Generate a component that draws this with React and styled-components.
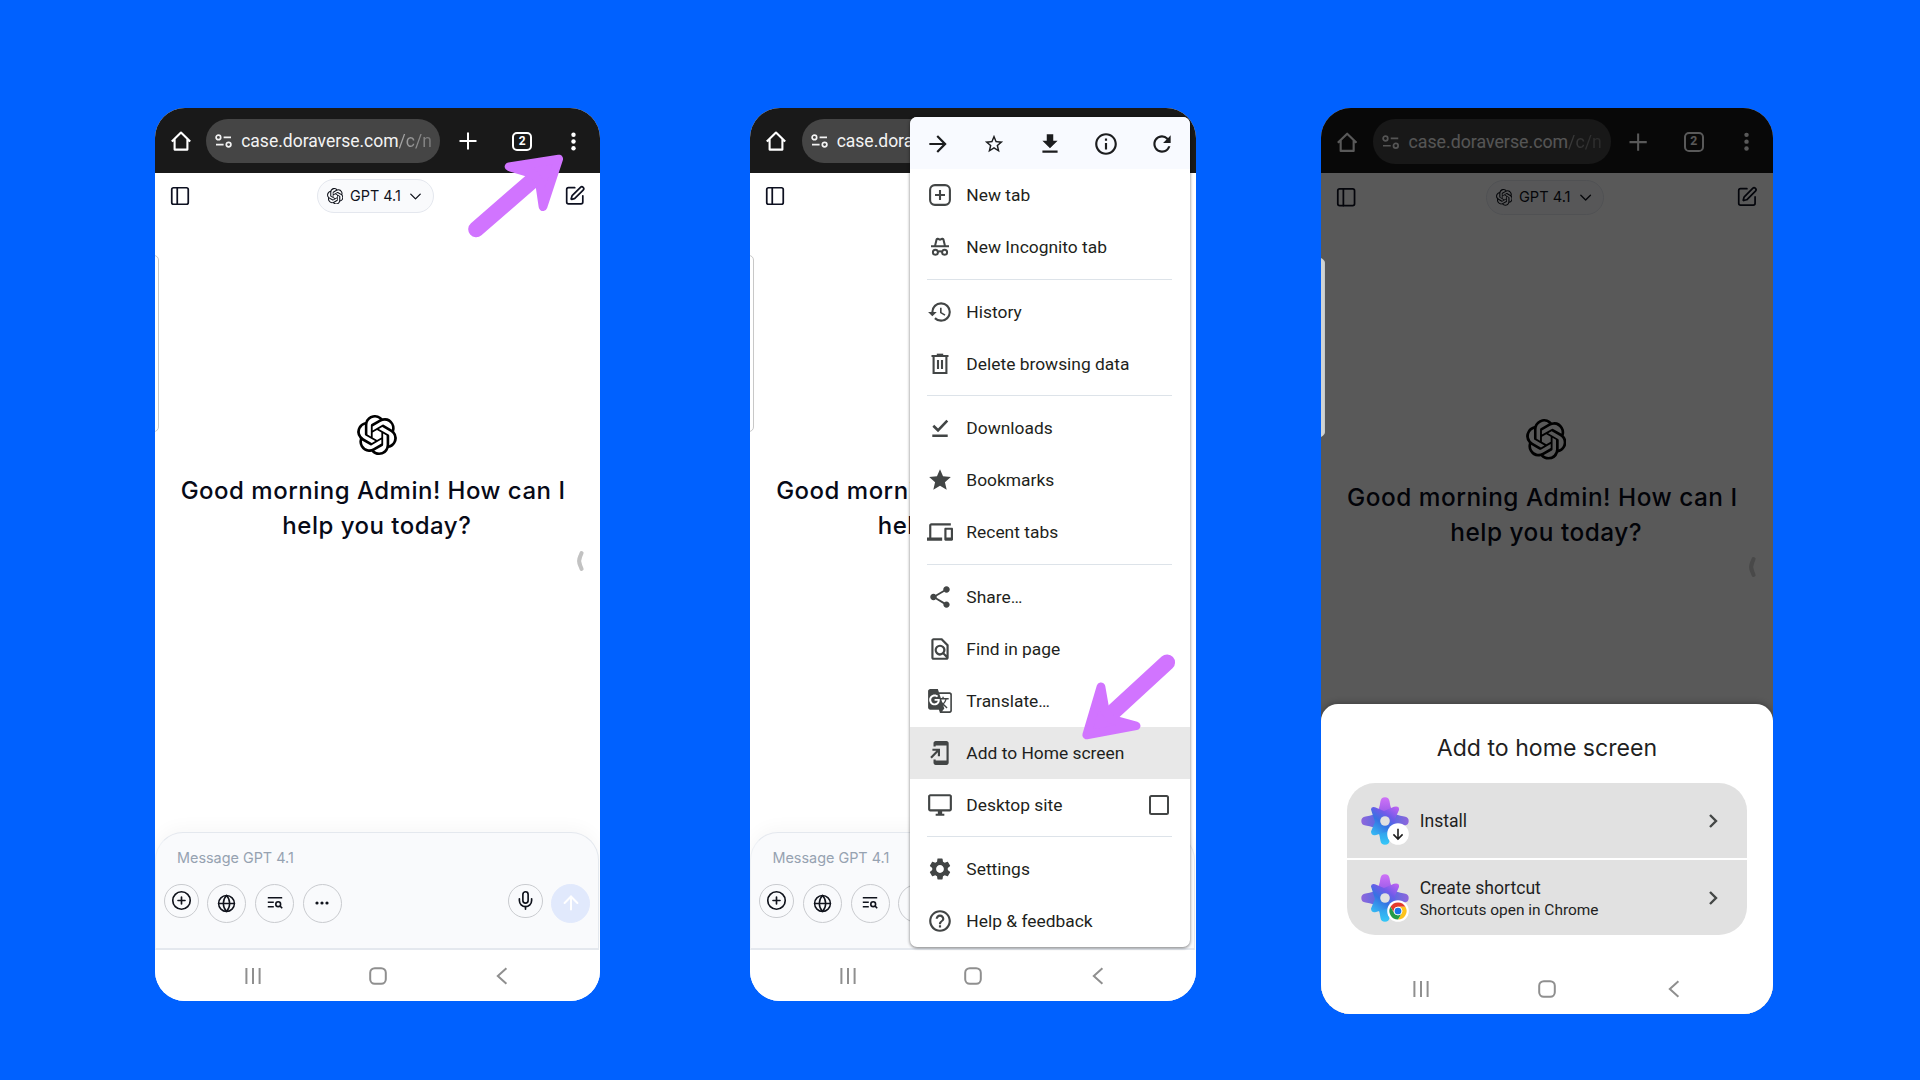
import React from "react";
import styled, { createGlobalStyle } from "styled-components";
import {
  MdGTranslate,
  MdAddToHomeScreen,
  MdOutlineFindInPage,
  MdDevices,
  MdFileDownload,
  MdHistory,
  MdArrowForward,
  MdStarBorder,
  MdInfoOutline,
  MdRefresh,
  MdStar,
  MdShare,
  MdOutlineDesktopWindows,
  MdSettings,
  MdHelpOutline,
} from "react-icons/md";
import { SiOpenai } from "react-icons/si";
import { PanelLeft, SquarePen, ChevronDown, Globe, CirclePlus, Mic, ArrowUp } from "lucide-react";

const ui = `Inter, "Liberation Sans", sans-serif`;
const android = `Roboto, "Liberation Sans", sans-serif`;

const GlobalStyle = createGlobalStyle`
  * { box-sizing: border-box; }
  body { margin: 0; background: #0061ff; overflow: hidden; }
  svg { display: block; flex: none; }
`;

const Stage = styled.main`
  width: 1920px;
  height: 1080px;
  padding: 108px 0 0 155px;
  display: flex;
  align-items: flex-start;
  background: #0061ff;
`;

const Phone = styled.section`
  position: relative;
  flex: none;
  width: ${(p) => p.$width}px;
  height: ${(p) => p.$height}px;
  margin-right: ${(p) => p.$gap || 0}px;
  border-radius: 30px;
  overflow: hidden;
  background: #fff;
`;

const Screen = styled.div`
  width: 445.3px;
  height: 893px;
  zoom: ${(p) => p.$scale};
  display: flex;
  flex-direction: column;
  background: #fff;
`;

/* Browser toolbar */
const BrowserBar = styled.header`
  height: 64.5px;
  flex: none;
  padding: 11px 0 9px 13.6px;
  display: flex;
  align-items: center;
  background: #191919;
  color: #fff;
`;

const BarIcon = styled.span`
  width: 24px;
  height: 24px;
  flex: none;
  margin-left: ${(p) => p.$gap || 0}px;
  display: grid;
  place-items: center;
`;

const Address = styled.div`
  width: 234px;
  height: 44px;
  flex: none;
  margin-left: 13.7px;
  padding-left: 9px;
  border-radius: 22px;
  display: flex;
  align-items: center;
  background: #454545;
  font: 400 17.5px/44px ${android};
  white-space: nowrap;
  overflow: hidden;
`;

const AddressText = styled.span`
  margin-left: 8.4px;
  padding-top: 0.4px;
  color: #f3f3f3;
`;

const AddressPath = styled.span`
  background: linear-gradient(90deg, #aaa, #777);
  background-clip: text;
  color: transparent;
`;

const TabCount = styled.span`
  width: 19.5px;
  height: 19.5px;
  border: 2px solid #fff;
  border-radius: 5px;
  display: grid;
  place-items: center;
  font: 700 12px/15px ${android};
`;

/* Chat page */
const ChatHeader = styled.div`
  height: 47px;
  flex: none;
  padding: 0 15px 0 14px;
  display: flex;
  align-items: center;
  justify-content: space-between;
  color: #0d1020;
`;

const ModelChip = styled.div`
  width: 116.5px;
  height: 34.5px;
  margin-right: 4px;
  border: 1px solid #e4e7ee;
  border-radius: 18px;
  background: #f9fafc;
  display: flex;
  align-items: center;
  padding-left: 8.8px;
  font: 400 14.4px/20px ${ui};
  color: #10131c;
`;

const ModelName = styled.span`
  width: 62.5px;
  padding-left: 6.6px;
  white-space: nowrap;
`;

const Greeting = styled.div`
  flex: 1;
  padding: 195.3px 1.6px 0 0;
  display: flex;
  flex-direction: column;
  align-items: center;
  color: #000;
`;

const GreetingText = styled.h1`
  margin: 19.6px 0 0;
  font: 450 24px/34.7px ${ui};
  letter-spacing: 0.5px;
  color: #070a17;
  text-align: center;
`;

const GreetingLine = styled.span`
  display: block;
  white-space: nowrap;
  padding-right: ${(p) => p.$trail || 0}px;
`;

const Composer = styled.div`
  height: 118px;
  flex: none;
  margin-right: 1px;
  padding: 15px 8px 0;
  border: 1px solid #e4e8ee;
  border-left-color: #eef1f5;
  border-bottom-width: 2px;
  border-radius: 28px 28px 0 0;
  background: #f9fafc;
  box-shadow: 0 -4px 18px rgba(0, 0, 0, 0.035);
`;

const Placeholder = styled.div`
  padding-left: 13px;
  font: 400 14.4px/20px ${ui};
  color: #96a2b1;
`;

const ComposerActions = styled.div`
  margin-top: 16px;
  display: flex;
  align-items: flex-start;
  gap: 8.8px;
`;

const Spacer = styled.span`
  flex: 1;
`;

const RoundButton = styled.span`
  width: ${(p) => p.$size}px;
  height: ${(p) => p.$size}px;
  border: 1px solid ${(p) => (p.$filled ? "#e1e9fc" : "#c9cbcf")};
  border-radius: 50%;
  display: grid;
  place-items: center;
  background: ${(p) => (p.$filled ? "#e1e9fc" : "transparent")};
  color: ${(p) => (p.$filled ? "#fff" : "#10131c")};
`;

const SystemNav = styled.nav`
  height: ${(p) => p.$height}px;
  flex: none;
  padding: 1.4px 0 0 ${(p) => p.$inset}px;
  display: flex;
  align-items: center;
  gap: ${(p) => p.$gap}px;
  background: #fff;
  color: #8f8f8f;
`;

/* Edge handles floating over the page */
const EdgePanel = styled.i`
  position: absolute;
  left: -6px;
  top: ${(p) => p.$top}px;
  width: ${(p) => (p.$lit ? 10 : 9.8)}px;
  height: ${(p) => p.$height}px;
  border: 1px solid ${(p) => (p.$lit ? "#c6cacb" : "#c8c8c8")};
  border-radius: 0 5px 5px 0;
  background: ${(p) => (p.$lit ? "#cfd3d4" : "#fff")};
`;

const EdgeGrip = styled.svg`
  position: absolute;
  left: ${(p) => p.$left}px;
  top: ${(p) => p.$top}px;
  width: 10px;
  height: 24px;
`;

/* Overflow menu */
const Menu = styled.div`
  position: absolute;
  left: 159.7px;
  top: 9px;
  width: 279.5px;
  height: 830px;
  border-radius: 7px;
  overflow: hidden;
  background: #fff;
  display: flex;
  flex-direction: column;
  box-shadow: 0 1px 3px rgba(0, 0, 0, 0.45), 0 0 4px rgba(0, 0, 0, 0.12);
`;

const MenuTools = styled.div`
  height: 52.4px;
  flex: none;
  padding: 1px 15px 0;
  display: flex;
  align-items: center;
  justify-content: space-between;
  background: #f8faff;
  color: #1c1d1f;
`;

const ToolSlot = styled.span`
  width: 26px;
  display: grid;
  place-items: center;
`;

const MenuRow = styled.div`
  height: 52px;
  flex: none;
  padding: 0 20.5px 0 17.2px;
  display: flex;
  align-items: center;
  background: ${(p) => (p.$active ? "#e8e8e8" : "transparent")};
  color: #424545;
`;

const MenuLabel = styled.span`
  flex: 1;
  margin-left: 13px;
  font: 400 17.4px/24px ${android};
  color: #1e1f20;
  white-space: nowrap;
`;

const MenuRule = styled.hr`
  width: 245px;
  height: 1.4px;
  flex: none;
  margin: 5.2px 0 5.9px 17px;
  border: 0;
  background: #dde3e9;
`;

const Checkbox = styled.span`
  width: 20px;
  height: 20px;
  border: 2px solid #424545;
  border-radius: 2.5px;
`;

/* Install sheet */
const Dim = styled.div`
  position: absolute;
  inset: 0;
  background: rgba(0, 0, 0, 0.65);
`;

const Sheet = styled.div`
  position: absolute;
  left: 0;
  right: 0;
  bottom: 0;
  height: 310px;
  border-radius: 17px 17px 0 0;
  background: #fff;
  box-shadow: 0 -1px 6px rgba(0, 0, 0, 0.3);
  display: flex;
  flex-direction: column;
`;

const SheetTitle = styled.h2`
  margin: 28px 0 19.4px;
  font: 400 23.1px/32px ${ui};
  text-align: center;
  color: #1f1f1f;
`;

const OptionList = styled.div`
  margin: 0 26px;
  border-radius: 28px;
  overflow: hidden;
  display: flex;
  flex-direction: column;
  gap: 2.4px;
`;

const Option = styled.div`
  height: 74.7px;
  padding: 0 21.5px 0 13.8px;
  display: flex;
  align-items: center;
  background: #e1e1e1;
  color: #444746;
`;

const OptionText = styled.div`
  flex: 1;
  margin-left: 10.9px;
  padding-top: ${(p) => (p.$tall ? 3.5 : 1.6)}px;
  font: 400 17.6px/21.8px ${android};
  color: #1f1f1f;
`;

const OptionNote = styled.div`
  font-size: 15.45px;
`;

const PointerLayer = styled.svg`
  position: absolute;
  left: 0;
  top: 0;
  width: 1920px;
  height: 1080px;
  pointer-events: none;
`;

function HomeGlyph() {
  return (
    <svg width="22" height="22" viewBox="0 0 22 22" fill="none" stroke="currentColor" strokeWidth="2.1">
      <path d="M1.8 11.6 11 2.600l9.200 9M4.600 9.200v10.400h12.800V9.200" strokeLinejoin="round" />
    </svg>
  );
}

function SiteControls() {
  return (
    <svg width="17.5" height="14" viewBox="0 0 17.5 14" fill="none" stroke="#f3f3f3" strokeWidth="1.7">
      <circle cx="3.4" cy="3.4" r="2.3" />
      <path d="M8.6 3.4H16M1 10.6h7.6" />
      <circle cx="13.6" cy="10.6" r="2.3" />
    </svg>
  );
}

function Toolbar() {
  return (
    <BrowserBar>
      <BarIcon><HomeGlyph /></BarIcon>
      <Address>
        <SiteControls />
        <AddressText>case.doraverse.com<AddressPath>/c/n</AddressPath></AddressText>
      </Address>
      <BarIcon $gap={15.6}>
        <svg width="18" height="18" viewBox="0 0 18 18" stroke="currentColor" strokeWidth="2"><path d="M9 .5v17M.5 9h17" /></svg>
      </BarIcon>
      <BarIcon $gap={30.3}><TabCount>2</TabCount></BarIcon>
      <BarIcon $gap={27.7}>
        <svg width="5" height="19" viewBox="0 0 5 19" fill="currentColor">
          <circle cx="2.5" cy="2.8" r="2.2" /><circle cx="2.5" cy="9.5" r="2.2" /><circle cx="2.5" cy="16.2" r="2.2" />
        </svg>
      </BarIcon>
    </BrowserBar>
  );
}

function ListSearch() {
  return (
    <svg width="16" height="14" viewBox="0 0 16 14" fill="none" stroke="currentColor" strokeWidth="1.6">
      <path d="M.8 1.8h14.4M.8 6.3h6M.8 10.8h6" />
      <circle cx="11.2" cy="8.2" r="2.4" />
      <path d="m12.9 9.9 2.3 2.3" />
    </svg>
  );
}

function NavButtons({ height, inset, gap }) {
  return (
    <SystemNav $height={height} $inset={inset} $gap={gap}>
      <svg width="24" height="24" viewBox="0 0 24 24" stroke="currentColor" strokeWidth="2"><path d="M5.4 4v16M12 4v16M18.6 4v16" /></svg>
      <svg width="24" height="24" viewBox="0 0 24 24" fill="none" stroke="currentColor" strokeWidth="2"><rect x="4.2" y="4.2" width="15.6" height="15.6" rx="4.6" /></svg>
      <svg width="24" height="24" viewBox="0 0 24 24" fill="none" stroke="currentColor" strokeWidth="2"><path d="m16.4 4.2-8.6 7.8 8.6 7.8" /></svg>
    </SystemNav>
  );
}

function ChatScreen({ scale = 1, nav = true }) {
  return (
    <Screen $scale={scale}>
      <Toolbar />
      <ChatHeader>
        <PanelLeft size={22} strokeWidth={1.9} />
        <ModelChip>
          <SiOpenai size={16.5} />
          <ModelName>GPT 4.1</ModelName>
          <ChevronDown size={19} strokeWidth={1.7} />
        </ModelChip>
        <SquarePen size={21.5} strokeWidth={1.9} />
      </ChatHeader>
      <Greeting>
        <SiOpenai size={40} />
        <GreetingText>
          <GreetingLine $trail={7.6}>Good morning Admin! How can I</GreetingLine>
          <GreetingLine>help you today?</GreetingLine>
        </GreetingText>
      </Greeting>
      <Composer>
        <Placeholder>Message GPT 4.1</Placeholder>
        <ComposerActions>
          <RoundButton $size={34.5}><CirclePlus size={21} strokeWidth={1.9} /></RoundButton>
          <RoundButton $size={39}><Globe size={19} strokeWidth={1.9} /></RoundButton>
          <RoundButton $size={39}><ListSearch /></RoundButton>
          <RoundButton $size={39}>
            <svg width="14" height="4" viewBox="0 0 14 4" fill="currentColor"><circle cx="2" cy="2" r="1.6" /><circle cx="7" cy="2" r="1.6" /><circle cx="12" cy="2" r="1.6" /></svg>
          </RoundButton>
          <Spacer />
          <RoundButton $size={34.5}><Mic size={21} strokeWidth={1.9} /></RoundButton>
          <RoundButton $size={39} $filled><ArrowUp size={22} strokeWidth={2.2} /></RoundButton>
        </ComposerActions>
      </Composer>
      {nav && <NavButtons height={51.5} inset={86} gap={100.7} />}
    </Screen>
  );
}

function Grip({ left, top, color }) {
  return (
    <EdgeGrip $left={left} $top={top} viewBox="0 0 10 24" fill="none" stroke={color} strokeWidth="4" strokeLinecap="round" strokeLinejoin="round">
      <path d="M6.600 4 5.200 7.500Q3 12 5.200 16.500L6.600 20" />
    </EdgeGrip>
  );
}

const line = { width: 26, height: 26, viewBox: "0 0 26 26", fill: "none", stroke: "currentColor", strokeWidth: 2.1 };

const NewTabIcon = () => (
  <svg {...line}><rect x="3.1" y="3.1" width="19.8" height="19.8" rx="4.8" /><path d="M13 8v10M8 13h10" /></svg>
);
const IncognitoIcon = () => (
  <svg {...line} strokeWidth="2">
    <path d="M4 12.2h18M8 12l1.6-6.6q.3-.9 1.1-.6l2.3.9 2.3-.9q.8-.3 1.1.6L18 12" />
    <circle cx="8.4" cy="18.3" r="2.5" /><circle cx="17.6" cy="18.3" r="2.5" /><path d="M10.9 17.8q2.1-1.1 4.2 0" />
  </svg>
);
const TrashIcon = () => (
  <svg {...line}><path d="M4.5 5h17M6.6 5v17h12.8V5M11 9v9M15 9v9" /><path d="M9.8 3.7h6.4" /></svg>
);
const DoneIcon = () => (
  <svg {...line} strokeWidth="2.6"><path d="M6.300 10.800l4.700 4.500 9.300-9.700M5.300 20.800h15.400" /></svg>
);

const sections = [
  [[NewTabIcon, "New tab"], [IncognitoIcon, "New Incognito tab"]],
  [[MdHistory, "History"], [TrashIcon, "Delete browsing data"]],
  [[DoneIcon, "Downloads"], [MdStar, "Bookmarks"], [MdDevices, "Recent tabs"]],
  [
    [MdShare, "Share…"],
    [MdOutlineFindInPage, "Find in page"],
    [MdGTranslate, "Translate…"],
    [MdAddToHomeScreen, "Add to Home screen"],
    [MdOutlineDesktopWindows, "Desktop site"],
  ],
  [[MdSettings, "Settings"], [MdHelpOutline, "Help & feedback"]],
];

function OverflowMenu() {
  return (
    <Menu>
      <MenuTools>
        <ToolSlot><MdArrowForward size={26} /></ToolSlot>
        <ToolSlot><MdStarBorder size={22} /></ToolSlot>
        <ToolSlot><MdFileDownload size={26} /></ToolSlot>
        <ToolSlot><MdInfoOutline size={26} /></ToolSlot>
        <ToolSlot><MdRefresh size={26} /></ToolSlot>
      </MenuTools>
      {sections.map((rows, i) => (
        <React.Fragment key={i}>
          {i > 0 && <MenuRule />}
          {rows.map(([Icon, label]) => (
            <MenuRow key={label} $active={label === "Add to Home screen"}>
              <Icon size={26} />
              <MenuLabel>{label}</MenuLabel>
              {label === "Desktop site" && <Checkbox />}
            </MenuRow>
          ))}
        </React.Fragment>
      ))}
    </Menu>
  );
}

const petal = "M24 26 14.5 17.5Q18.5 13 19.4 4.6 20 .3 24 .3T28.6 4.6Q29.5 13 33.5 17.5Z";

function AppLogo({ id, children }) {
  const g = (n) => `url(#${id}${n})`;
  return (
    <svg width="48" height="48" viewBox="0 0 48 48">
      <defs>
        <linearGradient id={id + "t"} x1="0" y1="0" x2="0" y2="1"><stop offset="0" stopColor="#cf72f7" /><stop offset="1" stopColor="#7b4fe0" /></linearGradient>
        <linearGradient id={id + "s"} x1="0" y1="0" x2="0" y2="1"><stop offset="0" stopColor="#8f66dc" /><stop offset="1" stopColor="#3b6ee4" /></linearGradient>
        <linearGradient id={id + "b"} x1="0" y1="0" x2="0" y2="1"><stop offset="0" stopColor="#35c8f8" /><stop offset="1" stopColor="#2f78e0" /></linearGradient>
        <linearGradient id={id + "c"} gradientUnits="userSpaceOnUse" x1="36" y1="8" x2="14" y2="40"><stop offset="0" stopColor="#c763f3" /><stop offset=".35" stopColor="#6f5be9" /><stop offset=".6" stopColor="#3573e2" /><stop offset="1" stopColor="#35bdf5" /></linearGradient>
      </defs>
      <path d={petal} fill={g("s")} transform="rotate(-90 24 24)" />
      <path d={petal} fill={g("s")} transform="rotate(90 24 24)" />
      <path d={petal} fill={g("t")} />
      <path d={petal} fill={g("b")} transform="rotate(180 24 24)" />
      <path d="M10 12.5Q10 9 14 10.2L23 14 33 9.8Q38.6 8.6 38 13L34 22 36 34 25 35 15 38Q10 39 10 34.5L14 25Z" fill={g("c")} />
      <circle cx="24" cy="24" r="4.8" fill="#e1e1e1" />
      <circle cx="37" cy="37" r="10.8" fill="#fff" />
      {children}
    </svg>
  );
}

function InstallBadge() {
  return <path d="M37 31.8v10M32.4 37.4l4.6 4.6 4.6-4.6" fill="none" stroke="#1f1f1f" strokeWidth="1.6" />;
}

function ChromeBadge() {
  return (
    <g transform="translate(28.4 28.4) scale(.358)">
      <path d="M24 12h20.8A24 24 0 0 0 3.2 12l10.4 18A12 12 0 0 1 24 12z" fill="#e33b2e" />
      <path d="M24 12a12 12 0 0 1 10.4 18L24 48A24 24 0 0 0 44.8 12z" fill="#fcc31e" />
      <path d="M34.4 30a12 12 0 0 1-20.8 0L3.2 12A24 24 0 0 0 24 48z" fill="#259b48" />
      <circle cx="24" cy="24" r="12" fill="#fff" />
      <circle cx="24" cy="24" r="9.4" fill="#1b74e8" />
    </g>
  );
}

const OptionChevron = () => (
  <svg width="24" height="24" viewBox="0 0 24 24" fill="none" stroke="currentColor" strokeWidth="2.4"><path d="m9 6 6 6-6 6" /></svg>
);

function InstallSheet() {
  return (
    <Sheet>
      <SheetTitle>Add to home screen</SheetTitle>
      <OptionList>
        <Option>
          <AppLogo id="install"><InstallBadge /></AppLogo>
          <OptionText>Install</OptionText>
          <OptionChevron />
        </Option>
        <Option>
          <AppLogo id="shortcut"><ChromeBadge /></AppLogo>
          <OptionText $tall>Create shortcut<OptionNote>Shortcuts open in Chrome</OptionNote></OptionText>
          <OptionChevron />
        </Option>
      </OptionList>
      <Spacer />
      <NavButtons height={51.5} inset={88} gap={102.5} />
    </Sheet>
  );
}

function Arrow({ transform }) {
  return (
    <g transform={transform} fill="#d174ff" stroke="#d174ff" strokeLinejoin="round" strokeLinecap="round">
      <path d="M-82.5 70.2-20 16" strokeWidth="16" />
      <path d="M0 0-49.7 7.7-25.3 15-19.3 23-15.7 47.7Z" strokeWidth="8.7" />
    </g>
  );
}

export default function App() {
  return (
    <>
      <GlobalStyle />
      <Stage>
        <Phone $width={445.3} $height={893} $gap={150.2}>
          <ChatScreen />
          <EdgePanel $top={147} $height={177} />
          <Grip left={419.6} top={440.5} color="#c2c2c2" />
        </Phone>
        <Phone $width={445.3} $height={893} $gap={125.2}>
          <ChatScreen />
          <EdgePanel $top={147} $height={177} />
          <OverflowMenu />
        </Phone>
        <Phone $width={452} $height={906}>
          <ChatScreen scale={1.0152} nav={false} />
          <Dim />
          <EdgePanel $lit $top={149.5} $height={179.5} />
          <Grip left={426} top={447} color="#494949" />
          <InstallSheet />
        </Phone>
      </Stage>
      <PointerLayer viewBox="0 0 1920 1080">
        <Arrow transform="translate(558.7 159)" />
        <Arrow transform="translate(1086.7 735) rotate(178.3)" />
      </PointerLayer>
    </>
  );
}
